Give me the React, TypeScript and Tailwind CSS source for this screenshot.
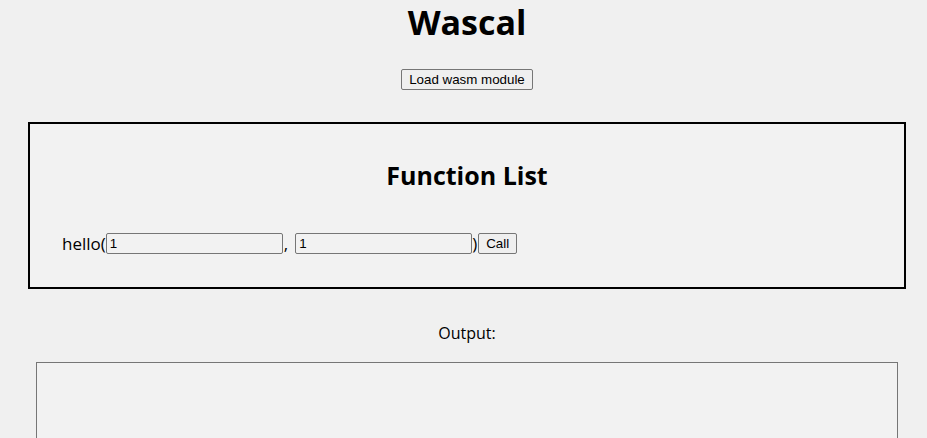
import React from "react";

export default function App() {
  const font = { fontFamily: '"Open Sans", "Noto Sans", sans-serif' };
  const arial = { fontFamily: '"Liberation Sans", Arial, sans-serif' };
  const btn =
    "bg-[#efefef] border border-[#767676] rounded-[2px] text-[13.33px] text-black leading-[15px] py-[2px]";
  const inp =
    "w-[177px] h-[21px] border border-[#767676] rounded-[2px] bg-[#f2f2f2] text-[13.33px] px-[3px]";
  return (
    <div
      className="min-h-screen bg-[#f0f0f0] pl-[28px] pr-[21px] text-black"
      style={font}
    >
      <h1 className="text-[34px] font-bold text-center leading-[40px] pt-[2px]">
        Wascal
      </h1>
      <div className="flex justify-center mt-[27px]">
        <button className={btn + " px-[7px]"} style={arial}>
          Load wasm module
        </button>
      </div>
      <div className="mt-[32px] border-2 border-black h-[167px] bg-[#f2f2f2] px-[32px]">
        <h2 className="text-[25px] font-bold text-center leading-[30px] mt-[36px]">
          Function List
        </h2>
        <div className="flex items-center mt-[43px] text-[17px] leading-[21px]">
          <span>hello(</span>
          <input defaultValue="1" className={inp} style={arial} />
          <span className="mr-[7px] ml-[1px]">,</span>
          <input defaultValue="1" className={inp} style={arial} />
          <span>)</span>
          <button className={btn + " px-[7px] h-[21px] ml-[1px]"} style={arial}>
            Call
          </button>
        </div>
      </div>
      <p className="text-center text-[16px] mt-[33px] leading-[22px]">Output:</p>
      <div className="px-[8px] mt-[18px]">
        <textarea className="block w-full h-[120px] border border-[#767676] bg-[#f2f2f2] resize-none" />
      </div>
    </div>
  );
}
